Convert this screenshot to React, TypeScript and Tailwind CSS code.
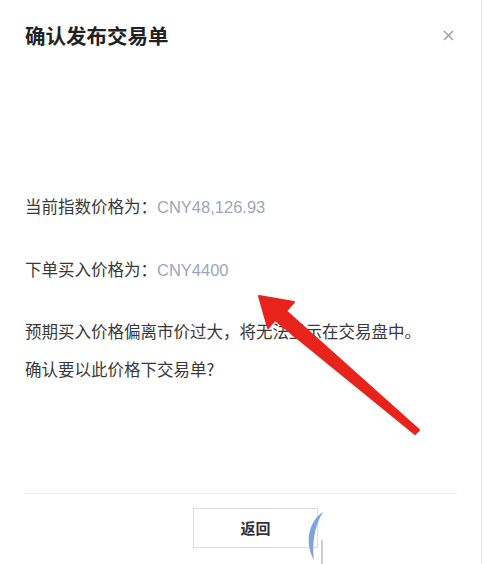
import React from 'react';

const FONT = { fontFamily: '"Noto Sans CJK SC", "Noto Sans", sans-serif' };
const NUM = { fontFamily: '"Liberation Sans", Arial, sans-serif' };

export default function App() {
    return (
        <div className="relative w-[486px] h-[564px] bg-white overflow-hidden" style={FONT}>
            {/* Dialog panel */}
            <div className="w-[482px] h-[564px] border-r border-[#e2e2e2] flex flex-col">
                {/* Header */}
                <div className="flex items-center justify-between pl-[25px] pr-[27px] pt-[21px]">
                    <h1 className="text-[20.5px] leading-[28px] font-bold text-[#222]">确认发布交易单</h1>
                    <svg width="11" height="11" viewBox="0 0 11 11" className="mt-[1px]">
                        <path d="M1 1 L10 10 M10 1 L1 10" stroke="#9a9a9a" strokeWidth="1.4" />
                    </svg>
                </div>

                {/* Body */}
                <div className="px-[25px] mt-[145px] text-[16.5px] leading-[24px] text-[#383838]">
                    <p>
                        当前指数价格为：<span className="text-[16.5px] text-[#9ba7b9]" style={NUM}>CNY48,126.93</span>
                    </p>
                    <p className="mt-[38px]">
                        下单买入价格为：<span className="text-[16.5px] text-[#9ba7b9]" style={NUM}>CNY4400</span>
                    </p>
                    <p className="mt-[37px]">预期买入价格偏离市价过大，将无法显示在交易盘中。</p>
                    <p className="mt-[14px]">确认要以此价格下交易单?</p>
                </div>

                {/* Footer */}
                <div className="mt-auto">
                    <div className="mx-[24px] h-px bg-[#ececec]" />
                    <div className="pl-[193px] pt-[14px] pb-[16px]">
                        <button className="w-[125px] h-[40px] border border-[#dcdcdc] bg-white text-[15px] font-bold text-[#333]">
                            返回
                        </button>
                    </div>
                </div>
            </div>

            {/* Annotation arrow */}
            <svg className="absolute left-0 top-0 pointer-events-none" width="486" height="564" viewBox="0 0 486 564">
                <polygon
                    points="259,296 294,302 286,311 419,430 415,434 275,320 268,328"
                    fill="#e8231c"
                    stroke="#e8231c"
                    strokeWidth="2"
                    strokeLinejoin="round"
                />
                {/* blue swoosh */}
                <defs>
                    <linearGradient id="sw" x1="0" y1="0" x2="0" y2="1">
                        <stop offset="0" stopColor="#6fa8e0" />
                        <stop offset="1" stopColor="#8e9fd0" />
                    </linearGradient>
                </defs>
                <path d="M323 512 C309 521 304 542 314 560 C312 545 314 526 323 512 Z" fill="url(#sw)" />
                <line x1="322" y1="540" x2="322" y2="564" stroke="#9a9a9a" strokeWidth="1" />
            </svg>
        </div>
    );
}
